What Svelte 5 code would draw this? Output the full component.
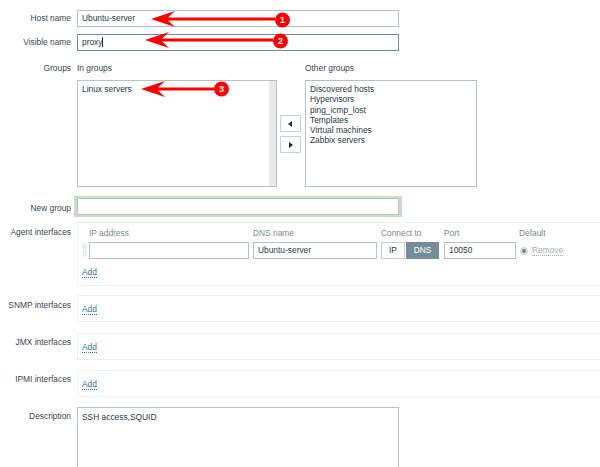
<script>
  const inGroups = ['Linux servers'];
  const otherGroups = ['Discovered hosts', 'Hypervisors', 'ping_icmp_lost', 'Templates', 'Virtual machines', 'Zabbix servers'];
  const simple = [
    { label: 'SNMP interfaces', cls: 'snmp' },
    { label: 'JMX interfaces', cls: 'jmx' },
    { label: 'IPMI interfaces', cls: 'ipmi' }
  ];
  const arrows = [
    { tip: 151, y: 19, end: 275, cy: 20, n: 1 },
    { tip: 145, y: 40, end: 273, cy: 41, n: 2 },
    { tip: 141, y: 89, end: 214, cy: 89, n: 3 }
  ];
</script>

<div class="page">
  <div class="row host">
    <div class="label">Host name</div>
    <div class="field wide">Ubuntu-server</div>
  </div>
  <div class="row visible">
    <div class="label">Visible name</div>
    <div class="field wide focus">proxy<span class="caret"></span></div>
  </div>
  <div class="row groups">
    <div class="label">Groups</div>
    <div class="lists">
      <div class="col">
        <div class="cap">In groups</div>
        <div class="list left">
          <div class="items">{#each inGroups as g}<div>{g}</div>{/each}</div>
          <div class="scroll"></div>
        </div>
      </div>
      <div class="moves">
        <div class="move"><svg width="5" height="6" viewBox="0 0 5 6"><path d="M4 0v6L0 3z" fill="#1f2c33"/></svg></div>
        <div class="move"><svg width="5" height="6" viewBox="0 0 5 6"><path d="M1 0v6l4-3z" fill="#1f2c33"/></svg></div>
      </div>
      <div class="col">
        <div class="cap">Other groups</div>
        <div class="list right">
          <div class="items">{#each otherGroups as g}<div>{g}</div>{/each}</div>
        </div>
      </div>
    </div>
  </div>
  <div class="row newgroup">
    <div class="label">New group</div>
    <div class="glow"><div class="field wide"></div></div>
  </div>
  <div class="row agent">
    <div class="label">Agent interfaces</div>
    <div class="box agentbox">
      <div class="ifgrid">
        <span></span>
        <div class="head">IP address</div>
        <div class="head">DNS name</div>
        <div class="head">Connect to</div>
        <div class="head">Port</div>
        <div class="head defhead">Default</div>
        <div class="dots"></div>
        <div class="field"></div>
        <div class="field">Ubuntu-server</div>
        <div class="toggle"><div class="tg">IP</div><div class="tg on">DNS</div></div>
        <div class="field">10050</div>
        <div class="def"><span class="radio"></span><span class="remove">Remove</span></div>
      </div>
      <span class="add">Add</span>
    </div>
  </div>
  {#each simple as s}
    <div class="row {s.cls}">
      <div class="label">{s.label}</div>
      <div class="box simple"><span class="add">Add</span></div>
    </div>
  {/each}
  <div class="row descr">
    <div class="label">Description</div>
    <div class="field wide area">SSH access,SQUID</div>
  </div>

  <svg class="overlay" width="600" height="467" viewBox="0 0 600 467" aria-hidden="true">
    {#each arrows as a}
      <path d="M{a.tip} {a.y} L{a.tip + 24} {a.y - 8} L{a.tip + 17} {a.y - 1.5} L{a.end} {a.y - 1.5} L{a.end} {a.y + 1.5} L{a.tip + 17} {a.y + 1.5} L{a.tip + 24} {a.y + 8} Z" fill="#f00"/>
      <circle cx={a.end + 7.5} cy={a.cy} r="7.5" fill="#f00"/>
      <text x={a.end + 7.5} y={a.cy + 3} class="num">{a.n}</text>
    {/each}
  </svg>
</div>

<style>
  :global(body) { margin: 0; background: #fff; }
  .page {
    position: relative;
    width: 600px;
    height: 467px;
    overflow: hidden;
    box-sizing: border-box;
    padding-top: 10px;
    font: 8.4px/1.15 "Liberation Sans", Arial, sans-serif;
    color: #2c3a42;
  }
  .row { display: grid; grid-template-columns: 71px 1fr; column-gap: 6px; }
  .label { text-align: right; color: #3a474f; padding-top: 4px; white-space: nowrap; }
  .visible { margin-top: 7px; }
  .groups { margin-top: 10px; }
  .newgroup { margin-top: 11px; }
  .newgroup .label { padding-top: 6px; }
  .agent { margin-top: 5px; }
  .agent .label, .snmp .label { padding-top: 6px; }
  .jmx .label, .ipmi .label { padding-top: 5px; }
  .snmp { margin-top: 9px; }
  .jmx { margin-top: 11px; }
  .ipmi { margin-top: 10px; }
  .descr { margin-top: 10px; }
  .descr .label { padding-top: 5px; }

  .field {
    box-sizing: border-box;
    height: 17px;
    border: 1px solid #b4c3ca;
    padding: 0 4px;
    line-height: 15px;
    background: #fff;
    white-space: nowrap;
  }
  .wide { width: 322px; }
  .focus { border-color: #5e8fb5; }
  .caret { display: inline-block; width: 1px; height: 10px; background: #1f2c33; vertical-align: -2px; }
  .area { height: 80px; line-height: 12px; padding-top: 3px; }

  .lists { display: flex; align-items: flex-start; }
  .col { display: flex; flex-direction: column; }
  .cap { height: 13px; line-height: 13px; color: #3a474f; margin-top: 1px; margin-bottom: 5px; }
  .groups .label { padding-top: 3px; }
  .list {
    box-sizing: border-box;
    height: 107px;
    border: 1px solid #b4c3ca;
    display: flex;
    justify-content: space-between;
  }
  .left { width: 200px; }
  .right { width: 172px; }
  .items { padding: 3px 4px; line-height: 10.3px; }
  .scroll { width: 7px; background: #e8e8e8; }
  .moves { display: flex; flex-direction: column; gap: 4px; margin: 54px 4px 0 3px; }
  .move {
    box-sizing: border-box;
    width: 21px;
    height: 17px;
    border: 1px solid #c6d1d6;
    border-radius: 1px;
    display: flex;
    align-items: center;
    justify-content: center;
  }

  .glow {
    width: 322px;
    margin: -2px 0 0 -3px;
    border: 3px solid #c3e0c3;
    border-top-width: 2px;
    border-bottom-width: 2px;
    height: 17px;
  }

  .box { box-sizing: border-box; border: 1px solid #edf0f2; border-right: 0; }
  .agentbox { height: 64px; padding: 4px 0 0 4px; }
  .simple { height: 27px; padding: 8px 0 0 4px; }
  .ifgrid {
    display: grid;
    grid-template-columns: 3px 160px 124px 59px 72px auto;
    column-gap: 4px;
    row-gap: 3px;
    grid-template-rows: 12px 17px;
    align-items: center;
  }
  .head { color: #7c8a92; line-height: 12px; }
  .defhead { margin-left: -1px; }
  .dots {
    width: 5px;
    height: 13px;
    background-image: radial-gradient(circle, #dde1e3 1px, transparent 1px);
    background-size: 2.5px 2.5px;
  }
  .toggle { display: flex; height: 17px; gap: 1px; }
  .tg {
    box-sizing: border-box;
    width: 24px;
    border: 1px solid #c6d1d6;
    text-align: center;
    line-height: 15px;
  }
  .tg.on { width: 33px; border-color: #768d99; background: #768d99; color: #fff; }
  .def { display: flex; align-items: center; gap: 4px; }
  .radio {
    box-sizing: border-box;
    width: 8px;
    height: 8px;
    border-radius: 50%;
    border: 2px solid #d8dcde;
    background: #7b8a92;
  }
  .remove { color: #a3adb3; border-bottom: 1px dotted #a3adb3; line-height: 10px; }
  .add {
    display: inline-block;
    color: #2a6fb0;
    border-bottom: 1px dotted #2a6fb0;
    line-height: 10px;
  }
  .agentbox .add { margin-top: 8px; }

  .overlay { position: absolute; left: 0; top: 0; pointer-events: none; }
  .num { font: bold 9px "Liberation Sans", Arial, sans-serif; fill: #fff; text-anchor: middle; }
</style>
